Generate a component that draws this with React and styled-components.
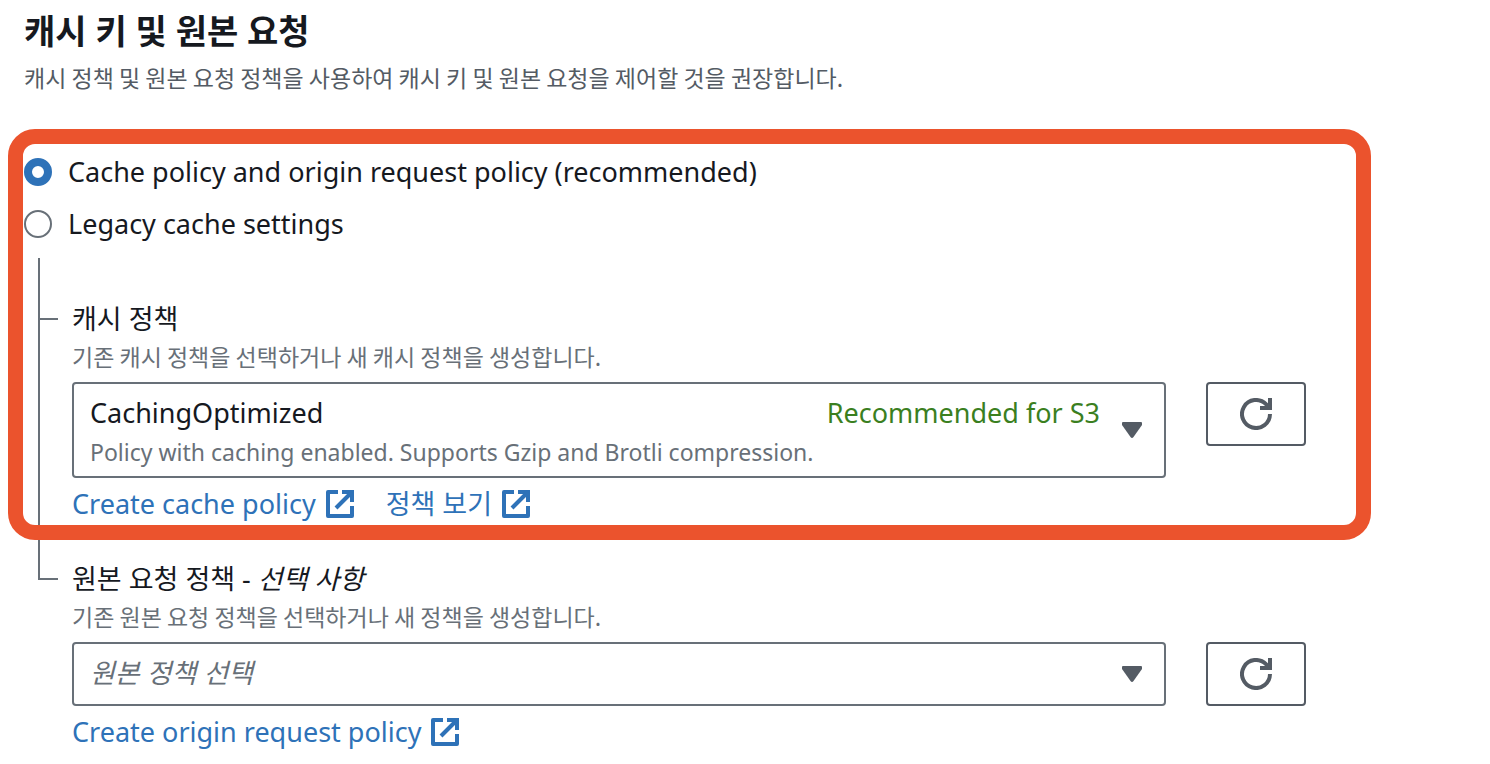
import React, { useState } from "react";
import styled, { createGlobalStyle } from "styled-components";

const ink = "#16191f";
const slate = "#545b64";
const muted = "#687078";
const blue = "#2e72b8";
const green = "#3b7f1f";
const orange = "#eb532d";
const korean = `"Noto Sans CJK KR", "Noto Sans", sans-serif`;

const GlobalStyle = createGlobalStyle`
  *, *::before, *::after { box-sizing: border-box; }
  body {
    margin: 0;
    background: #fff;
    color: ${ink};
    font-family: "Noto Sans", "Noto Sans CJK KR", sans-serif;
    font-size: 27px;
  }
`;

const Page = styled.main`
  padding: 11px 184px 6px 24px;
`;

const Title = styled.h2`
  margin: 0 0 8px;
  font-size: 34px;
  line-height: 40px;
  font-weight: 700;
`;

const Subtitle = styled.p`
  margin: 0 0 51px;
  color: ${slate};
  font-family: ${korean};
  font-size: 23px;
  line-height: 36px;
`;

const Highlighted = styled.div`
  position: relative;

  &::after {
    content: "";
    position: absolute;
    inset: -17px -65px -10px -16px;
    border: 15px solid ${orange};
    border-radius: 27px;
    pointer-events: none;
  }
`;

const Choices = styled.fieldset`
  margin: 0 0 8px;
  padding: 0;
  border: 0;
`;

const Choice = styled.label`
  display: flex;
  align-items: center;
  gap: 16px;
  line-height: 52px;
`;

const Radio = styled.input`
  appearance: none;
  flex: none;
  width: 28px;
  height: 28px;
  margin: 0;
  border: 2px solid ${muted};
  border-radius: 50%;
  background: #fff;

  &:checked {
    border: 8px solid ${blue};
  }
`;

const Branch = styled.section`
  display: flex;
`;

const Rail = styled.div`
  flex: none;
  display: flex;
  flex-direction: column;
  width: 48px;
  padding: 0 14px;
`;

const Elbow = styled.div`
  height: ${(p) => p.$height}px;
  border: solid ${muted};
  border-width: 0 0 2px 2px;
`;

const Stem = styled.div`
  flex: 1;
  border-left: 2px solid ${muted};
`;

const Field = styled.div`
  flex: 1;
  min-width: 0;
  padding-top: ${(p) => p.$top}px;
`;

const FieldLabel = styled.label`
  display: block;
  line-height: 38px;
`;

const Hint = styled.p`
  margin: 0 0 8px;
  color: ${muted};
  font-family: ${korean};
  font-size: 23px;
  line-height: 36px;
`;

const ControlRow = styled.div`
  display: flex;
  align-items: flex-start;
  gap: 40px;
`;

const SelectBox = styled.div`
  flex: 1;
  min-width: 0;
  display: grid;
  grid-template-columns: 1fr auto 64px;
  align-items: center;
  min-height: 64px;
  border: 2px solid ${muted};
  border-radius: 4px;
`;

const Select = styled.select`
  appearance: none;
  grid-area: 1 / 1 / -1 / -1;
  align-self: stretch;
  width: 100%;
  margin: 0;
  padding: ${(p) => (p.$described ? "8px 64px 42px 16px" : "0 64px 2px 16px")};
  border: 0;
  background: transparent;
  color: ${(p) => (p.$placeholder ? muted : ink)};
  font: inherit;
  font-style: ${(p) => (p.$placeholder ? "italic" : "normal")};
  line-height: 36px;
`;

const DescribedBox = styled(SelectBox)`
  grid-template-rows: 50px 42px;
`;

const Tag = styled.span`
  grid-area: 1 / 2;
  padding-top: 8px;
  color: ${green};
  line-height: 36px;
  pointer-events: none;
`;

const Description = styled.span`
  grid-area: 2 / 1 / 3 / 3;
  align-self: start;
  padding-left: 16px;
  color: ${muted};
  font-size: 23px;
  line-height: 36px;
  pointer-events: none;
`;

const Caret = styled.svg`
  grid-column: 3;
  grid-row: 1 / -1;
  justify-self: center;
  width: 20px;
  height: 16px;
  fill: ${slate};
  pointer-events: none;
`;

const RefreshButton = styled.button`
  flex: none;
  display: grid;
  place-items: center;
  width: 100px;
  height: 64px;
  padding: 0;
  border: 2px solid ${slate};
  border-radius: 4px;
  background: #fff;
`;

const Links = styled.div`
  display: flex;
  gap: 32px;
  line-height: 52px;
`;

const Link = styled.a`
  display: flex;
  align-items: center;
  gap: 10px;
  color: ${blue};
  text-decoration: none;
`;

function CaretIcon() {
  return (
    <Caret viewBox="0 0 20 16" aria-hidden="true">
      <path d="M1 0H19Q20 0 20 1V3L11.500 15Q10 17 8.500 15L0 3V1Q0 0 1 0Z" />
    </Caret>
  );
}

function RefreshIcon() {
  return (
    <svg width="32" height="32" viewBox="0 0 32 32" fill="none" stroke={slate} strokeWidth="4" aria-hidden="true">
      <path d="M30 16A14 14 0 1 1 26 6.200L29 9.500" />
      <path d="M30 0V10H20" />
    </svg>
  );
}

function ExternalIcon() {
  return (
    <svg width="28" height="28" viewBox="0 0 28 28" fill="none" stroke={blue} strokeWidth="4" aria-hidden="true">
      <path d="M12 2H2V26H26V16" strokeLinejoin="round" />
      <path d="M16 2H26V12" />
      <path d="M26 2L10 18" />
    </svg>
  );
}

function ExternalLink({ children }) {
  return (
    <Link href="#">
      {children}
      <ExternalIcon />
    </Link>
  );
}

function Refresh({ label }) {
  return (
    <RefreshButton type="button" aria-label={label}>
      <RefreshIcon />
    </RefreshButton>
  );
}

export default function App() {
  const [mode, setMode] = useState("policy");
  return (
    <>
      <GlobalStyle />
      <Page>
        <Title>캐시 키 및 원본 요청</Title>
        <Subtitle>캐시 정책 및 원본 요청 정책을 사용하여 캐시 키 및 원본 요청을 제어할 것을 권장합니다.</Subtitle>

        <Highlighted>
          <Choices>
            <Choice>
              <Radio type="radio" name="mode" checked={mode === "policy"} onChange={() => setMode("policy")} />
              Cache policy and origin request policy (recommended)
            </Choice>
            <Choice>
              <Radio type="radio" name="mode" checked={mode === "legacy"} onChange={() => setMode("legacy")} />
              Legacy cache settings
            </Choice>
          </Choices>

          <Branch>
            <Rail>
              <Elbow $height={62} />
              <Stem />
            </Rail>
            <Field $top={42}>
              <FieldLabel htmlFor="cache-policy">캐시 정책</FieldLabel>
              <Hint>기존 캐시 정책을 선택하거나 새 캐시 정책을 생성합니다.</Hint>
              <ControlRow>
                <DescribedBox>
                  <Select id="cache-policy" $described aria-describedby="cache-policy-text">
                    <option>CachingOptimized</option>
                  </Select>
                  <Tag>Recommended for S3</Tag>
                  <Description id="cache-policy-text">
                    Policy with caching enabled. Supports Gzip and Brotli compression.
                  </Description>
                  <CaretIcon />
                </DescribedBox>
                <Refresh label="캐시 정책" />
              </ControlRow>
              <Links>
                <ExternalLink>Create cache policy</ExternalLink>
                <ExternalLink>정책 보기</ExternalLink>
              </Links>
            </Field>
          </Branch>
        </Highlighted>

        <Branch>
          <Rail>
            <Elbow $height={50} />
          </Rail>
          <Field $top={30}>
            <FieldLabel htmlFor="origin-policy">
              원본 요청 정책 - <em>선택 사항</em>
            </FieldLabel>
            <Hint>기존 원본 요청 정책을 선택하거나 새 정책을 생성합니다.</Hint>
            <ControlRow>
              <SelectBox>
                <Select id="origin-policy" $placeholder>
                  <option>원본 정책 선택</option>
                </Select>
                <CaretIcon />
              </SelectBox>
              <Refresh label="원본 요청 정책" />
            </ControlRow>
            <Links>
              <ExternalLink>Create origin request policy</ExternalLink>
            </Links>
          </Field>
        </Branch>
      </Page>
    </>
  );
}
